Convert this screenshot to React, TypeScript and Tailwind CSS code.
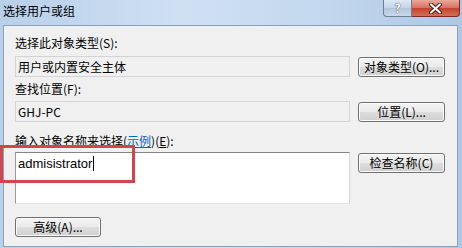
const btn =
  "flex h-[20px] items-center justify-center whitespace-nowrap rounded-[3px] border border-[#707070] bg-[linear-gradient(#f3f3f3,#ebebeb_48%,#dddddd_52%,#cfcfcf)] text-[12px] text-black shadow-[inset_0_0_0_1px_#fbfbfb]";

const CaptionButtons = () => (
  <div className="flex h-[17px]">
    <div className="flex w-[29px] items-center justify-center rounded-bl-[4px] border border-t-0 border-[#6f7f95] bg-[linear-gradient(#dfe8f3,#c6d4e6_50%,#b4c5dc_52%,#cbd8ea)] text-[12px] font-bold leading-none text-white [text-shadow:0_0_1px_#3d4f69,0_0_1px_#3d4f69]">
      ?
    </div>
    <div className="flex w-[48px] items-center justify-center rounded-br-[4px] border border-l-0 border-t-0 border-[#7e2a23] bg-[linear-gradient(#e9a99c,#d8705f_50%,#c7412d_52%,#d36f55)]">
      <svg width="13" height="11" viewBox="0 0 13 11">
        <path
          d="M2 1.5 L11 9.5 M11 1.5 L2 9.5"
          stroke="#3b1410"
          strokeWidth="4"
          strokeLinecap="round"
        />
        <path
          d="M2 1.5 L11 9.5 M11 1.5 L2 9.5"
          stroke="#ffffff"
          strokeWidth="2.2"
          strokeLinecap="round"
        />
      </svg>
    </div>
  </div>
);

export default function App() {
  return (
    <div className="relative h-[248px] w-[462px] overflow-hidden bg-[linear-gradient(90deg,#b9d0ea,#cfe0f3_40%,#c3d8ee_70%,#aec7e3)] font-['Noto_Sans_CJK_SC',sans-serif] text-black">
      {/* title bar */}
      <div className="flex h-[25px] items-start justify-between">
        <div className="pl-[3px] pt-[4px] text-[12px] leading-[14px]">选择用户或组</div>
        <div className="mr-[2px]">
          <CaptionButtons />
        </div>
      </div>

      {/* client area */}
      <div className="ml-[3px] h-[222px] w-[455px] border border-[#8aa1bd] bg-[#f0f0f0] pl-[11px] pt-[10px] text-[12px] leading-[14px]">
        <div>选择此对象类型(S):</div>
        <div className="mt-[6px] flex items-start gap-[8px]">
          <div className="flex h-[21px] w-[335px] items-center border border-[#d4d4d4] pl-[2px]">
            用户或内置安全主体
          </div>
          <div className={`${btn} mt-[1px] w-[87px]`}>对象类型(O)...</div>
        </div>

        <div className="mt-[5px]">查找位置(F):</div>
        <div className="mt-[5px] flex items-start gap-[8px]">
          <div className="flex h-[21px] w-[335px] items-center border border-[#d4d4d4] pl-[2px]">
            GHJ-PC
          </div>
          <div className={`${btn} mt-[1px] w-[87px]`}>位置(L)...</div>
        </div>

        <div className="mt-[12px]">
          输入对象名称来选择(
          <span className="text-[#0066cc] underline">示例</span>)(<span className="underline">E</span>):
        </div>
        <div className="mt-[4px] flex items-start gap-[8px]">
          <div className="h-[52px] w-[335px] border border-b-[#e3e3e3] border-l-[#9a9a9a] border-r-[#d6d6d6] border-t-[#858585] bg-white pl-[2px] pt-[3px]">
            <div className="flex items-center font-['Liberation_Sans',sans-serif] text-[13px] leading-[15px]">
              admisistrator
              <span className="ml-[1px] h-[15px] w-px bg-black" />
            </div>
          </div>
          <div className={`${btn} mt-[1px] w-[87px]`}>检查名称(C)</div>
        </div>

        <div className={`${btn} mt-[13px] w-[86px]`}>高级(A)...</div>
      </div>

      {/* red annotation box */}
      <div className="absolute left-0 top-[145px] h-[38px] w-[135px] border-[3px] border-[#d0464c]" />
    </div>
  );
}
